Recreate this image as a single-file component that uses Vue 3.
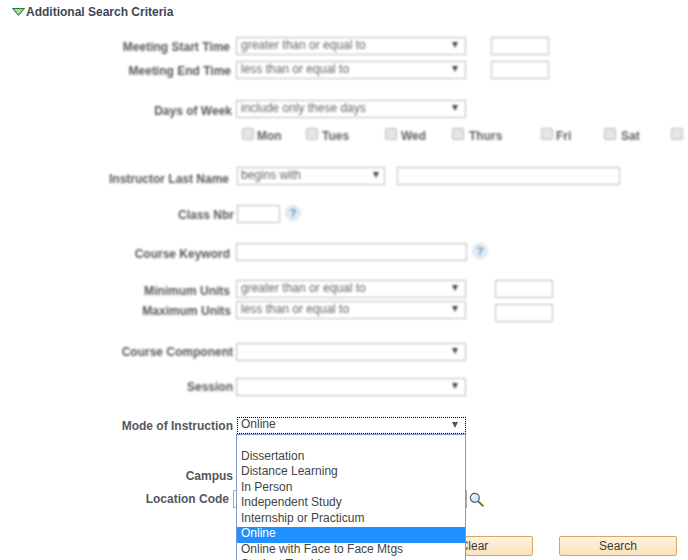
<template>
  <div class="page">
    <div class="heading">
      <svg class="twisty" width="13" height="8" viewBox="0 0 13 8">
        <path d="M0.5 0.5H12.5L6.5 7.5Z" fill="#7fd07f" stroke="#2f7d3a" stroke-width="1" stroke-linejoin="round" />
        <path d="M3 1.5H10L6.5 5.5Z" fill="#a6e6a0" />
      </svg>
      <span>Additional Search Criteria</span>
    </div>

    <!-- blurred part of the form -->
    <div class="blurred">
      <div class="row r-start">
        <label>Meeting Start Time</label>
        <div class="select w230"><span>greater than or equal to</span><i class="arrow"></i></div>
        <input class="box small gap25" type="text" />
      </div>
      <div class="row r-end">
        <label>Meeting End Time</label>
        <div class="select w230"><span>less than or equal to</span><i class="arrow"></i></div>
        <input class="box small gap25" type="text" />
      </div>

      <div class="row r-days">
        <label>Days of Week</label>
        <div class="select w230"><span>include only these days</span><i class="arrow"></i></div>
      </div>
      <div class="days">
        <div v-for="d in days" :key="d.name" class="day" :style="{ width: d.width + 'px' }">
          <span class="check"></span>
          <span class="day-name" :style="{ marginLeft: d.gap + 'px' }">{{ d.name }}</span>
        </div>
      </div>

      <div class="row r-instr">
        <label>Instructor Last Name</label>
        <div class="select w148"><span>begins with</span><i class="arrow"></i></div>
        <input class="box wide" type="text" />
      </div>

      <div class="row r-class">
        <label>Class Nbr</label>
        <input class="box tiny" type="text" />
        <span class="help">?</span>
      </div>

      <div class="row r-keyword">
        <label>Course Keyword</label>
        <input class="box keyword" type="text" />
        <span class="help">?</span>
      </div>

      <div class="row r-min">
        <label>Minimum Units</label>
        <div class="select w230"><span>greater than or equal to</span><i class="arrow"></i></div>
        <input class="box small gap29" type="text" />
      </div>
      <div class="row r-max">
        <label>Maximum Units</label>
        <div class="select w230"><span>less than or equal to</span><i class="arrow"></i></div>
        <input class="box small gap29 nudge" type="text" />
      </div>

      <div class="row r-comp">
        <label>Course Component</label>
        <div class="select w230"><i class="arrow"></i></div>
      </div>
      <div class="row r-session">
        <label>Session</label>
        <div class="select w230"><i class="arrow"></i></div>
      </div>
    </div>

    <div class="sharp">
      <div class="row r-mode">
        <label>Mode of Instruction</label>
        <div class="select focus"><span>Online</span><i class="arrow"></i></div>

        <!-- open dropdown list -->
        <ul class="options">
          <li v-for="o in options" :key="o" :class="{ active: o === 'Online' }">{{ o }}</li>
        </ul>
      </div>

      <div class="row r-campus">
        <label>Campus</label>
      </div>
      <div class="row r-location">
        <label>Location Code</label>
        <input class="box location" type="text" />
        <svg class="lens" width="15" height="15" viewBox="0 0 15 15">
          <path d="M9 9L13.8 13.8" stroke="#7d7a3a" stroke-width="2" stroke-linecap="round" />
          <circle cx="5.8" cy="5.8" r="4.5" fill="#d6e8fb" stroke="#56606c" stroke-width="1.2" />
          <path d="M3.3 5.8a2.5 2.5 0 0 1 2.5-2.5" fill="none" stroke="#fff" stroke-width="1.2" />
        </svg>
      </div>

      <div class="buttons">
        <button class="btn" type="button">Clear</button>
        <button class="btn" type="button">Search</button>
      </div>
    </div>
  </div>
</template>

<script setup>
const days = [
  { name: 'Mon', width: 64, gap: 3 },
  { name: 'Tues', width: 79, gap: 4 },
  { name: 'Wed', width: 67, gap: 4 },
  { name: 'Thurs', width: 89, gap: 5 },
  { name: 'Fri', width: 63, gap: 3 },
  { name: 'Sat', width: 67, gap: 5 },
  { name: '', width: 17, gap: 0 },
]

const options = [
  '',
  'Dissertation',
  'Distance Learning',
  'In Person',
  'Independent Study',
  'Internship or Practicum',
  'Online',
  'Online with Face to Face Mtgs',
  'Student Teaching',
]
</script>

<style>
html, body {
  margin: 0;
  background: #fff;
  overflow: hidden;
}
</style>

<style scoped>
.page {
  position: relative;
  width: 688px;
  height: 560px;
  overflow: hidden;
  background: #fff;
  font-family: "Liberation Sans", Arial, sans-serif;
  font-size: 12px;
  color: #444;
}
.heading {
  display: flex;
  align-items: center;
  gap: 1px;
  height: 14px;
  padding: 5px 0 0 12px;
  font-weight: bold;
  color: #3d4653;
}
.blurred {
  filter: blur(1.2px);
}
.row {
  display: flex;
  align-items: center;
  height: 18px;
}
.row label {
  flex: none;
  box-sizing: border-box;
  width: 236px;
  padding-right: 3px;
  text-align: right;
  font-weight: bold;
  color: #55585c;
}

.r-start { margin-top: 18px; }
.r-end { margin-top: 6px; }
.r-days { margin-top: 21px; }
.r-instr { margin-top: 24px; }
.r-class { margin-top: 20px; }
.r-keyword { margin-top: 20px; }
.r-min { margin-top: 19px; }
.r-max { margin-top: 3px; }
.r-comp { margin-top: 24px; }
.r-session { margin-top: 17px; }
.r-mode { margin-top: 21px; position: relative; height: 17px; }
.r-campus { margin-top: 33px; }
.r-location { margin-top: 5px; }

/* labels sit a little off the control line in the original */
.r-start label { padding: 2px 6px 0 0; }
.r-end label { padding: 2px 5px 0 0; }
.r-days label { padding: 3px 4px 0 0; }
.r-instr label { padding: 6px 7px 0 0; }
.r-class label { padding: 2px 2px 0 0; }
.r-keyword label { padding: 3px 6px 0 0; }
.r-min label { padding: 3px 6px 0 0; }
.r-max label { padding: 1px 5px 0 0; }
.r-location label { width: 233px; padding-right: 4px; }

.select {
  display: flex;
  align-items: center;
  justify-content: space-between;
  box-sizing: border-box;
  height: 18px;
  padding: 0 7px 2px 4px;
  border: 1px solid #bbb;
  background: #fff;
  color: #666;
  flex: none;
}
.w230 { width: 230px; }
.w148 { width: 148px; margin-left: 1px; padding-left: 3px; padding-right: 5px; }
.select .arrow {
  width: 0;
  height: 0;
  margin-left: auto;
  border-left: 3.5px solid transparent;
  border-right: 3.5px solid transparent;
  border-top: 6px solid #444;
}
.select.focus {
  width: 229px;
  height: 17px;
  margin-left: 1px;
  padding-left: 3px;
  padding-bottom: 4px;
  border: 1px dotted #000;
  color: #444;
}
.select.focus .arrow {
  margin-top: 3px;
  border-top-color: #555;
}

.box {
  box-sizing: border-box;
  height: 18px;
  padding: 0;
  border: 1px solid #bbb;
  background: #fff;
  flex: none;
}
.small { width: 58px; }
.gap25 { margin-left: 25px; }
.gap29 { margin-left: 29px; }
.nudge { position: relative; top: 3px; }
.wide { width: 223px; margin-left: 12px; }
.tiny { width: 43px; margin-left: 1px; }
.keyword { width: 231px; }
.location {
  width: 234px;
  border-color: #aaa;
}

.help {
  flex: none;
  box-sizing: border-box;
  width: 16px;
  height: 16px;
  margin: -2px 0 0 5px;
  border: 1px solid #cfdeee;
  border-radius: 50%;
  background: #e2ecf6;
  color: #5f8fc0;
  font-size: 11px;
  font-weight: bold;
  line-height: 14px;
  text-align: center;
}

.days {
  display: flex;
  height: 15px;
  margin-top: 10px;
  padding-left: 242px;
}
.day {
  display: flex;
  align-items: flex-start;
  flex: none;
}
.check {
  flex: none;
  box-sizing: border-box;
  width: 12px;
  height: 12px;
  border: 1px solid #bbb;
  border-radius: 2px;
  background: #e6e6e6;
}
.day-name {
  margin-top: 1px;
  font-weight: bold;
  color: #5f6266;
}

.options {
  position: absolute;
  z-index: 2;
  left: 236px;
  top: 17px;
  box-sizing: border-box;
  width: 230px;
  height: 127px;
  margin: 0;
  padding: 0;
  overflow: hidden;
  list-style: none;
  background: #fff;
  border: 1px solid #7b9bd6;
  border-bottom: 0;
}
.options li {
  box-sizing: border-box;
  height: 15.5px;
  padding-left: 4px;
  line-height: 13px;
  color: #444;
}
.options li:first-child {
  height: 14.5px;
}
.options li.active {
  background: #1e90ff;
  color: #fff;
}

.lens {
  flex: none;
  margin-left: 2px;
}

.buttons {
  display: flex;
  justify-content: flex-end;
  gap: 26px;
  margin-top: 28px;
  padding-right: 11px;
}
.btn {
  box-sizing: border-box;
  width: 118px;
  height: 20px;
  padding: 0;
  border: 1px solid #dda367;
  border-radius: 2px;
  background: linear-gradient(#fdf3dd, #fae2bd);
  font-family: inherit;
  font-size: 12px;
  color: #3d3d3d;
}
</style>
